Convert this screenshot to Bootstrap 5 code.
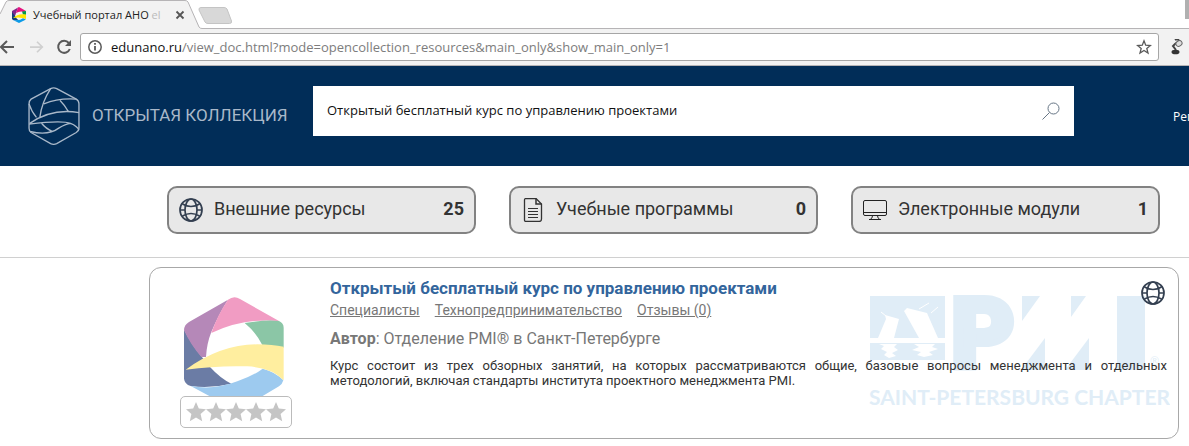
<!DOCTYPE html>
<html lang="ru">
<head>
<meta charset="utf-8">
<meta name="viewport" content="width=device-width, initial-scale=1">
<title>Учебный портал АНО</title>
<link rel="stylesheet" href="https://cdn.jsdelivr.net/npm/bootstrap@5.3.0/dist/css/bootstrap.min.css">
<style>
  body { font-family: Roboto, sans-serif; color: #333; background: #fff; overflow-x: hidden; }
  svg { display: block; flex: none; }
  .chrome-ui { font-family: "Open Sans", sans-serif; }
  .tab-strip { height: 29px; box-shadow: inset 0 -1px #b6b4b6; overflow: hidden; }
  .browser-tab { width: 202px; height: 29px; padding-left: 11px; font-size: 11px; line-height: 29px; color: #222; }
  .tab-shape { left: 0; top: 0; z-index: 0; }
  .tab-title { width: 140px; padding-left: 6px; white-space: nowrap; }
  .tab-title span { color: #bbb; }
  .new-tab { margin: 7px 0 0 -4px; }
  .window-edge { width: 4px; height: 19px; background: #b0b0b0; }
  .tool-bar { height: 37px; background: #f2f2f2; border-bottom: 1px solid #b6b4b6; padding-right: 6px; }
  .icon-btn { border: 0; padding: 0; background: none; }
  .url-box { height: 28px; border: 1px solid #a6a6a6; border-radius: 3px; background: #fff; padding: 0 6px; font-size: 13px; color: #7d7d7d; line-height: 26px; min-width: 0; }
  .url-box b { font-weight: 400; color: #111; }
  .site-header { background: #012d58; min-height: 100px; padding-left: 28px; overflow: hidden; }
  .brand-link { width: 285px; color: #a9b8c9; font-size: 17px; text-decoration: none; white-space: nowrap; }
  .search-form { height: 50px; background: #fff; padding: 0 14px; margin-bottom: 10px; }
  .search-form input { border: 0; outline: 0; padding: 0 0 2px; background: none; font: 13px "Open Sans", sans-serif; color: #111; min-width: 0; }
  .user-link { width: 115px; padding-left: 99px; font: 12px "Open Sans", sans-serif; color: #fff; text-decoration: none; white-space: nowrap; overflow: hidden; }
  .filters { padding: 20px 29px 23px 167px; border-bottom: 1px solid #d0d0d0; gap: 33px; }
  .filter-btn { flex: 1 1 0; height: 48px; background: #e8e8e8; border: 2px solid #828282; border-radius: 10px; padding: 0 10px; font-size: 18px; color: #333; }
  .filter-btn span, .filter-btn strong { padding-bottom: 3px; }
  .filter-btn span { margin-left: 11px; }
  .results { padding: 9px 10px 7px 149px; }
  .course { border: 1px solid #a8a8a8; border-radius: 12px; min-height: 172px; padding: 10px 11px 10px 30px; }
  .thumb { width: 112px; margin-right: 38px; padding-top: 19px; }
  .thumb > svg { margin-left: 4px; }
  .stars { height: 32px; border: 1px solid #bbb; border-radius: 5px; background: #fff; }
  .course-title { font-size: 17px; font-weight: 700; line-height: 20px; margin: 0; }
  .course-title a { color: #33659c; text-decoration: none; }
  .tags { font-size: 14px; line-height: 18px; gap: 15px; margin-top: 3px; }
  .tags a { color: #777; }
  .author { font-size: 16px; line-height: 20px; color: #777; margin: 10px 0 9px; }
  .about { font-size: 13px; line-height: 15px; text-align: justify; margin: 0; }
  .watermark { right: 8px; top: 27px; z-index: 0; }
  .type-mark { right: 13px; top: 13px; z-index: 1; }
</style>
</head>
<body>
<svg class="d-none" aria-hidden="true">
  <symbol id="globe" viewBox="0 0 24 24">
    <g fill="none" stroke="#333f50" stroke-width="1.700">
      <circle cx="12" cy="12" r="11"/>
      <ellipse cx="12" cy="12" rx="6" ry="11"/>
      <path d="M1 12H6M18 12H23M3.500 6Q12 11 20.500 6M3.500 18Q12 13 20.500 18"/>
    </g>
  </symbol>
  <symbol id="star" viewBox="0 0 20 20"><path fill="#c5c5c5" d="M10 0l2.800 6.600 7.200.7-5.400 4.800 1.600 7.100L10 15.500l-6.200 3.700 1.600-7.100L0 7.300l7.200-.7z"/></symbol>
</svg>

<div class="chrome-ui">
  <div class="tab-strip d-flex">
    <div class="browser-tab position-relative d-flex align-items-center">
      <svg class="tab-shape position-absolute" width="202" height="29"><path d="M0 29V14L6 1H187L200 28H202V29Z" fill="#f2f2f2"/><path d="M0 14L6 2Q7 .5 9 .5H185Q187 .5 188 2L199 27Q200 28.500 202 28.500" fill="none" stroke="#b6b4b6"/></svg>
      <svg class="position-relative" width="16" height="16" viewBox="0 0 16 16"><path d="M1 4L7 .5 4 9 1 10Z" fill="#80268b"/><path d="M7 .5L8 0 15 4 13 5Q9 3.500 5 6Z" fill="#e6117e"/><path d="M11 4.500L15 4V8L12 7.500Z" fill="#00984a"/><path d="M1 5L4 9 6 12 9 14 2 13 1 12Z" fill="#123f7c"/><path d="M2 11Q7 6 15 7.500V12Q9 9.500 2 11Z" fill="#ffe600"/><path d="M2 13Q9 14 12 11.200L15 12.500 8 16Z" fill="#0b9be8"/></svg>
      <div class="tab-title position-relative">Учебный портал АНО <span>el</span></div>
      <button class="icon-btn position-relative ms-1 ps-1" aria-label="Закрыть вкладку"><svg width="10" height="10" viewBox="0 0 10 10"><path d="M1.500 1.500l7 7M8.500 1.500l-7 7" stroke="#555" stroke-width="1.800"/></svg></button>
    </div>
    <button class="icon-btn new-tab align-self-start" aria-label="Новая вкладка"><svg width="35" height="18"><path d="M3 .5H26Q28 .5 29 2L33.500 14Q34 16.500 31.500 16.500H10Q8 16.500 7 15L1 3Q.5 .5 3 .5Z" fill="#d8d8d8" stroke="#c4c4c4"/></svg></button>
    <div class="window-edge ms-auto"></div>
  </div>
  <div class="tool-bar d-flex align-items-center">
    <button class="icon-btn" aria-label="Назад"><svg width="14" height="14" viewBox="0 0 14 14"><path d="M14 7H1M7 1L1 7l6 6" fill="none" stroke="#5a5a5a" stroke-width="2"/></svg></button>
    <button class="icon-btn ms-3 ps-0" aria-label="Вперёд" disabled><svg width="14" height="14" viewBox="0 0 16 14"><path d="M0 7H14M8 1l6 6-6 6" fill="none" stroke="#d0d0d0" stroke-width="2"/></svg></button>
    <button class="icon-btn ms-2 ps-1" aria-label="Обновить"><svg width="16" height="16" viewBox="0 0 16 16"><path d="M12.800 4A6 6 0 1 0 13.800 10" fill="none" stroke="#5a5a5a" stroke-width="2"/><path d="M15 1V7H9Z" fill="#5a5a5a"/></svg></button>
    <div class="url-box d-flex align-items-center flex-grow-1 ms-2">
      <svg width="16" height="16" viewBox="0 0 16 16"><circle cx="8" cy="8" r="6.200" fill="none" stroke="#5a5a5a" stroke-width="1.500"/><path d="M8 7v4.500M8 4v1.800" stroke="#5a5a5a" stroke-width="1.800"/></svg>
      <div class="ms-1 ps-1 text-truncate"><b>edunano.ru</b>/view_doc.html?mode=opencollection_resources&amp;main_only&amp;show_main_only=1</div>
      <button class="icon-btn ms-auto" aria-label="В закладки"><svg width="16" height="16" viewBox="0 0 16 16"><path d="M8 1.800l1.700 4.400 4.700.3-3.600 3 1.200 4.600-4-2.600-4 2.600 1.200-4.600-3.600-3 4.700-.3z" fill="none" stroke="#5a5a5a" stroke-width="1.300"/></svg></button>
    </div>
    <button class="icon-btn ms-2 ps-1" aria-label="Расширение"><svg width="12" height="16" viewBox="0 0 12 16"><path d="M4 1Q7-1 8 2L4 5 2 7 5 11" fill="none" stroke="#444" stroke-width="2"/><ellipse cx="8" cy="4.500" rx="3.200" ry="2.600" transform="rotate(-35 8 4.500)" fill="#ddd" stroke="#666"/><ellipse cx="4.500" cy="13" rx="4" ry="2.300" fill="#333"/></svg></button>
  </div>
</div>

<header class="site-header d-flex align-items-center">
  <a class="brand-link d-flex align-items-center" href="#">
    <svg width="52" height="58" viewBox="0 0 152 172"><g fill="none" stroke="#a9b8c9" stroke-width="4"><path d="M66 5Q75 0 84 5L142 36Q150 41 150 50V122Q150 130 142 135L84 168Q75 172 66 168L8 135Q2 131 2 122V50Q2 41 8 36Z"/><path d="M66 5Q40 45 34 90M2 50Q10 74 24 90M46 50Q90 32 142 36M94 40Q108 54 118 72M4 108Q70 62 150 76M2 110Q100 98 125 108Q145 116 150 128M5 132Q60 145 90 122Q110 110 125 108M38 106Q52 124 72 132"/></g></svg>
    <span class="ms-2 ps-1">ОТКРЫТАЯ КОЛЛЕКЦИЯ</span>
  </a>
  <form class="search-form d-flex align-items-center flex-grow-1" role="search">
    <input class="flex-grow-1" type="text" aria-label="Поиск" value="Открытый бесплатный курс по управлению проектами">
    <button class="icon-btn" type="button" aria-label="Найти"><svg width="18" height="18" viewBox="0 0 18 18"><circle cx="11.500" cy="6.500" r="5.500" fill="none" stroke="#667585"/><path d="M7.500 10.500L.5 17.500" stroke="#667585"/></svg></button>
  </form>
  <a class="user-link" href="#">Рег</a>
</header>

<main>
  <div class="filters d-flex">
    <button class="filter-btn d-flex align-items-center"><svg width="24" height="24"><use href="#globe"/></svg><span>Внешние ресурсы</span><strong class="ms-auto">25</strong></button>
    <button class="filter-btn d-flex align-items-center"><svg width="24" height="24" viewBox="0 0 24 24"><g fill="none" stroke="#333"><path d="M5 .5H15L20.500 6V21Q20.500 23.500 18 23.500H5Q3.500 23.500 3.500 22V2Q3.500 .5 5 .5Z" stroke-width="1.300"/><path d="M15 .5V6H20.500" stroke-width="1.500"/><path d="M7 10.500H17M7 13.500H17M7 16.500H17M7 19.500H17"/></g></svg><span>Учебные программы</span><strong class="ms-auto">0</strong></button>
    <button class="filter-btn d-flex align-items-center"><svg width="24" height="24" viewBox="0 0 24 24"><g fill="none" stroke="#222"><rect x=".5" y="2.500" width="23" height="15" rx="1.500"/><path d="M1 14.500H23M9.500 17.500Q9.500 20.500 7.500 21M14.500 17.500Q14.500 20.500 16.500 21M6 21.500H18"/></g></svg><span>Электронные модули</span><strong class="ms-auto">1</strong></button>
  </div>

  <section class="results">
    <article class="course position-relative d-flex">
      <svg class="watermark position-absolute" width="301" height="120" viewBox="0 0 301 120" fill="#e0edf7" role="img" aria-label="PMI Saint-Petersburg Chapter">
        <path d="M1 1H76V65H1Z"/>
        <path fill="#fff" d="M1 43H9L17 24 16 20 30 24 25 43H50L35 16 38 13 58 18 69 43H76V48H1ZM10 49H28L25 52 29 55 23 58 27 61 20 63 15 60 18 57 12 54 15 51ZM45 49H66L63 52 69 54 60 57 64 60 55 62 48 60 52 57 43 55 50 52Z"/>
        <path d="M12 17L17 21M50 14L60 8M62 18L69 12" stroke="#fff"/>
        <text x="82" y="73" font-family="Roboto, sans-serif" font-weight="900" font-size="98" stroke="#e0edf7" stroke-width="6">P</text>
        <path d="M153 1H171L153 26ZM202 1H217L202 22ZM176 43V75H152ZM220 43V75H196Z"/>
        <rect x="248" y="1" width="28" height="74"/>
        <text x="281" y="70" font-family="Lato, sans-serif" font-size="11">®</text>
        <text x="0" y="110" font-family="Lato, sans-serif" font-size="21" font-weight="700">SAINT-PETERSBURG CHAPTER</text>
      </svg>
      <svg class="type-mark position-absolute" width="24" height="24" role="img" aria-label="Внешний ресурс"><use href="#globe"/></svg>

      <div class="thumb flex-shrink-0">
        <svg width="100" height="99" viewBox="0 0 300 297">
          <path fill="#6b7ca5" d="M0 98Q25 145 52 178L78 210Q110 245 142 260Q80 275 20 267Q2 262 0 245Z"/>
          <path fill="#b588b8" d="M132 8L15 75Q0 84 0 100Q20 144 52 180H66Q68 140 82 105Q105 50 132 8Z"/>
          <path fill="#f19cc3" d="M132 8Q150-6 168 6L285 72Q180 62 82 108Q100 55 132 8Z"/>
          <path fill="#8bc6a6" d="M182 78Q240 68 285 72Q299 78 299 92V152L235 144Q215 105 182 78Z"/>
          <path fill="#9dcaef" d="M20 267Q90 280 160 253Q210 235 236 215Q275 225 298 250Q295 262 285 268L236 297H76Z"/>
          <path fill="#ffee9f" d="M5 218Q110 142 220 142Q265 143 299 149V250Q265 212 190 208Q100 205 5 218Z"/>
        </svg>
        <div class="stars d-flex align-items-center justify-content-center" role="img" aria-label="Нет оценок">
          <svg width="20" height="20"><use href="#star"/></svg><svg width="20" height="20"><use href="#star"/></svg><svg width="20" height="20"><use href="#star"/></svg><svg width="20" height="20"><use href="#star"/></svg><svg width="20" height="20"><use href="#star"/></svg>
        </div>
      </div>
      <div class="position-relative flex-grow-1">
        <h2 class="course-title"><a href="#">Открытый бесплатный курс по управлению проектами</a></h2>
        <div class="tags d-flex flex-wrap"><a href="#">Специалисты</a><a href="#">Технопредпринимательство</a><a href="#">Отзывы (0)</a></div>
        <p class="author"><strong>Автор</strong>: Отделение PMI® в Санкт-Петербурге</p>
        <p class="about">Курс состоит из трех обзорных занятий, на которых рассматриваются общие, базовые вопросы менеджмента и отдельных методологий, включая стандарты института проектного менеджмента PMI.</p>
      </div>
    </article>
  </section>
</main>
<script src="https://cdn.jsdelivr.net/npm/bootstrap@5.3.0/dist/js/bootstrap.bundle.min.js"></script>
</body>
</html>
